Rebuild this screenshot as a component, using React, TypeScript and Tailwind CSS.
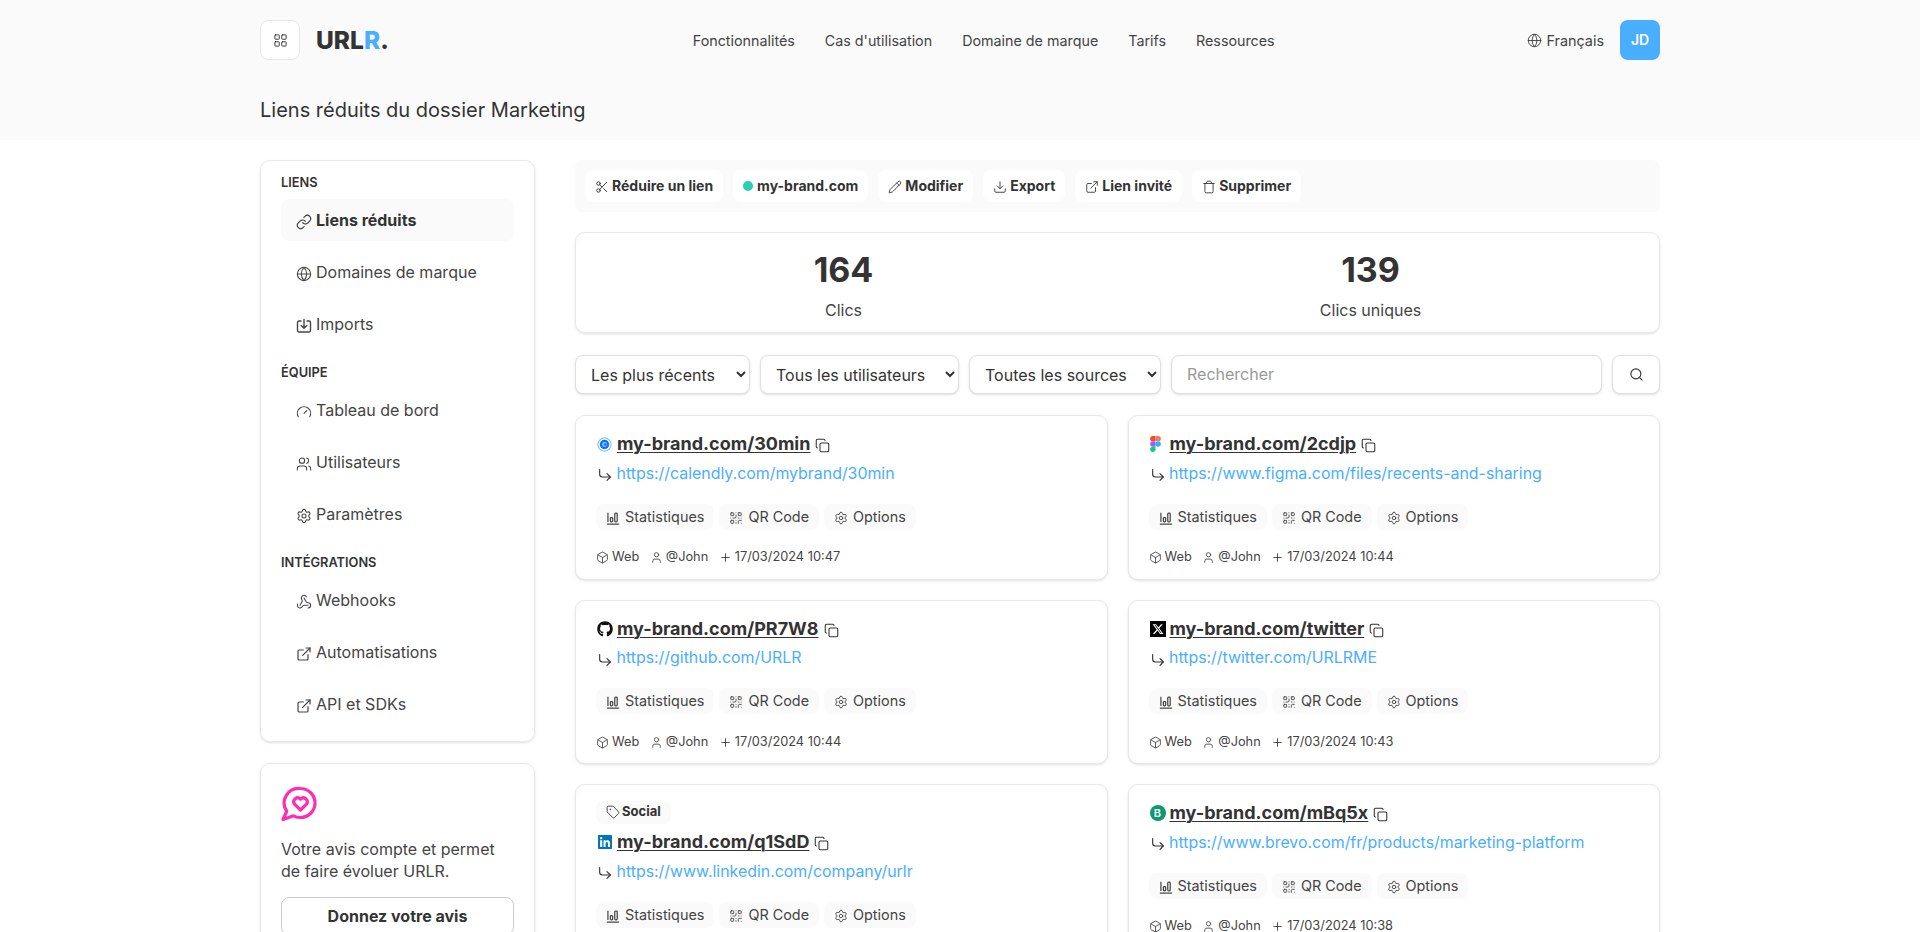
import {
  Box,
  Copy,
  CornerDownRight,
  Download,
  ExternalLink,
  Gauge,
  Globe,
  LayoutGrid,
  Link,
  Pencil,
  Plus,
  QrCode,
  Scissors,
  Search,
  Settings,
  Tag,
  Trash,
  User,
  Users,
  Webhook,
} from 'lucide-react';
import type { ReactNode } from 'react';
import { FaGithub, FaLinkedin, FaXTwitter } from 'react-icons/fa6';

function StatsIcon() {
  return (
    <svg viewBox="0 0 16 16" className="w-[14px] h-[14px] mt-[2px]" fill="none" stroke="currentColor" strokeWidth="1.4">
      <path d="M1 15h14" />
      <path d="M2.2 2v10.5" />
      <rect x="5" y="7.5" width="2.6" height="5" rx="1" />
      <rect x="10" y="2.5" width="2.8" height="10" rx="1" />
    </svg>
  );
}

function ImportIcon() {
  return (
    <svg viewBox="0 0 16 16" className="w-[16px] h-[16px] mt-[3px]" fill="none" stroke="currentColor" strokeWidth="1.4" strokeLinecap="round" strokeLinejoin="round">
      <path d="M5 3H3a1.5 1.5 0 0 0-1.5 1.5v8A1.5 1.5 0 0 0 3 14h10a1.5 1.5 0 0 0 1.5-1.5v-8A1.5 1.5 0 0 0 13 3h-2" />
      <path d="M8 1.5v8.5M5.2 7.5 8 10.2l2.8-2.7" />
    </svg>
  );
}

function Calendly() {
  return (
    <svg viewBox="0 0 16 16" className="w-[15px] h-[15px]">
      <circle cx="8" cy="8" r="7" fill="none" stroke="#86c9ff" strokeWidth="1.4" />
      <circle cx="8" cy="8" r="5" fill="#0d6efd" />
      <circle cx="8" cy="8" r="2.6" fill="#8fd0ff" />
      <circle cx="8.6" cy="8" r="1.4" fill="#0d6efd" />
    </svg>
  );
}

function Figma() {
  return (
    <svg viewBox="0 0 12 18" className="w-[11px] h-[16px]">
      <path d="M3 0h3v6H3a3 3 0 0 1 0-6z" fill="#f24e1e" />
      <path d="M6 0h3a3 3 0 0 1 0 6H6z" fill="#ff7262" />
      <path d="M3 6h3v6H3a3 3 0 0 1 0-6z" fill="#a259ff" />
      <circle cx="9" cy="9" r="3" fill="#1abcfe" />
      <path d="M3 12h3v3a3 3 0 1 1-3-3z" fill="#0acf83" />
    </svg>
  );
}

function Brevo() {
  return (
    <span className="w-4 h-4 rounded-full bg-[#0b996e] flex items-center justify-center text-white text-[11px] leading-none font-semibold">
      B
    </span>
  );
}

function XLogo() {
  return (
    <span className="w-4 h-4 bg-black flex items-center justify-center">
      <FaXTwitter size={12} color="#fff" />
    </span>
  );
}

function HeartBubble() {
  return (
    <svg viewBox="0 0 36 36" className="w-9 h-9" fill="none" stroke="#ff2db2" strokeWidth="3.2" strokeLinejoin="round" strokeLinecap="round">
      <path d="M19.5 2.5a14.5 14.5 0 0 1 0 29c-2.8 0-5-.6-7-1.7L2 33.5l3.8-8.4A14.5 14.5 0 0 1 19.5 2.5z" />
      <path d="M19.5 24l-6.2-6.2a3.9 3.9 0 0 1 5.3-5.4l.9.8.9-.8a3.9 3.9 0 0 1 5.3 5.4z" />
    </svg>
  );
}

const sideSections = [
  {
    title: 'Liens',
    items: [
      { label: 'Liens réduits', icon: <Link size={16} strokeWidth={1.6} className="mt-[3px]" />, active: true },
      { label: 'Domaines de marque', icon: <Globe size={16} strokeWidth={1.6} className="mt-[3px]" /> },
      { label: 'Imports', icon: <ImportIcon /> },
    ],
  },
  {
    title: 'Équipe',
    items: [
      { label: 'Tableau de bord', icon: <Gauge size={16} strokeWidth={1.6} className="mt-[3px]" /> },
      { label: 'Utilisateurs', icon: <Users size={16} strokeWidth={1.6} className="mt-[3px]" /> },
      { label: 'Paramètres', icon: <Settings size={16} strokeWidth={1.6} className="mt-[3px]" /> },
    ],
  },
  {
    title: 'Intégrations',
    items: [
      { label: 'Webhooks', icon: <Webhook size={16} strokeWidth={1.6} className="mt-[3px]" /> },
      { label: 'Automatisations', icon: <ExternalLink size={16} strokeWidth={1.8} className="mt-[3px]" /> },
      { label: 'API et SDKs', icon: <ExternalLink size={16} strokeWidth={1.8} className="mt-[3px]" /> },
    ],
  },
];

const toolbar = [
  { label: 'Réduire un lien', icon: <Scissors size={14} strokeWidth={1.6} className="mt-[2px]" /> },
  { label: 'my-brand.com', icon: <span className="w-[10px] h-[10px] rounded-full bg-[#26cfb5] mr-[1px]" /> },
  { label: 'Modifier', icon: <Pencil size={14} strokeWidth={1.5} className="mt-[1px]" /> },
  { label: 'Export', icon: <Download size={14} strokeWidth={1.5} className="mt-[2px]" /> },
  { label: 'Lien invité', icon: <ExternalLink size={14} strokeWidth={1.5} className="mt-[2px]" /> },
  { label: 'Supprimer', icon: <Trash size={14} strokeWidth={1.5} className="mt-[2px]" /> },
];

const links: { slug: string; url: string; date: string; icon: ReactNode; tag?: string }[] = [
  { slug: '30min', url: 'https://calendly.com/mybrand/30min', date: '17/03/2024 10:47', icon: <Calendly /> },
  { slug: '2cdjp', url: 'https://www.figma.com/files/recents-and-sharing', date: '17/03/2024 10:44', icon: <Figma /> },
  { slug: 'PR7W8', url: 'https://github.com/URLR', date: '17/03/2024 10:44', icon: <FaGithub size={16} color="#111" /> },
  { slug: 'twitter', url: 'https://twitter.com/URLRME', date: '17/03/2024 10:43', icon: <XLogo /> },
  { slug: 'q1SdD', url: 'https://www.linkedin.com/company/urlr', date: '17/03/2024 10:40', icon: <FaLinkedin size={16} color="#0077b5" />, tag: 'Social' },
  { slug: 'mBq5x', url: 'https://www.brevo.com/fr/products/marketing-platform', date: '17/03/2024 10:38', icon: <Brevo /> },
];

function Pill({ icon, label }: { icon: ReactNode; label: string }) {
  return (
    <span className="h-[26px] px-[10px] flex items-center gap-[5px] bg-[#fafafa] rounded-lg text-[14.4px] text-[#444]">
      {icon}
      {label}
    </span>
  );
}

function LinkCard({ slug, url, date, icon, tag }: (typeof links)[number]) {
  return (
    <div className="bg-white border border-[#e8e8e8] rounded-[10px] shadow-sm px-[20px] pt-[14.5px] pb-[12px] self-start w-full">
      {tag && (
        <span className="mt-[1px] mb-[5px] w-fit h-[23px] px-[10px] flex items-center gap-[2px] bg-[#fafafa] rounded-lg text-[13px] font-bold">
          <Tag size={14} strokeWidth={1.5} />
          {tag}
        </span>
      )}
      <div className="h-[27px] flex items-center">
        <span className="w-[21px] pl-[1px] flex items-center">{icon}</span>
        <span className="text-lg font-bold underline underline-offset-2 decoration-1">my-brand.com/{slug}</span>
        <Copy size={15} strokeWidth={1.7} className="ml-[5px] mt-[3px]" />
      </div>
      <div className="mt-[4px] h-6 flex items-center">
        <span className="w-[20.5px] pl-[1px] flex items-center">
          <CornerDownRight size={16} strokeWidth={1.7} className="mt-[3px]" />
        </span>
        <span className="text-[15.9px] text-[#4aaeff]">{url}</span>
      </div>
      <div className="mt-[18px] flex gap-[5px]">
        <Pill icon={<StatsIcon />} label="Statistiques" />
        <Pill icon={<QrCode size={14} strokeWidth={1.6} className="mt-[2px]" />} label="QR Code" />
        <Pill icon={<Settings size={14} strokeWidth={1.6} className="mt-[2px]" />} label="Options" />
      </div>
      <div className="mt-[18px] h-[19px] flex items-center gap-[10.5px] text-[12.8px] text-[#444]">
        <span className="flex items-center gap-[3px]">
          <Box size={13} strokeWidth={1.6} className="mt-[1px]" />
          Web
        </span>
        <span className="flex items-center gap-[3px]">
          <User size={13} strokeWidth={1.6} className="mt-[1px]" />
          @John
        </span>
        <span className="flex items-center gap-[3px]">
          <Plus size={13} strokeWidth={1.7} className="mt-[1px]" />
          {date}
        </span>
      </div>
    </div>
  );
}

export default function App() {
  return (
    <div className="h-screen overflow-hidden bg-white text-[#333] [font-family:Inter,sans-serif]">
      <header className="h-[140px] bg-[#fafafa]">
        <div className="w-[1400px] mx-auto pt-5">
          <div className="h-10 flex items-center">
            <button className="w-10 h-10 bg-white border border-[#e8e8e8] rounded-lg flex items-center justify-center">
              <LayoutGrid size={15} strokeWidth={1.5} />
            </button>
            <span className="ml-4 text-[24.5px] font-extrabold leading-none">
              URL<span className="text-[#4aaeff]">R</span>.
            </span>
            <nav className="ml-[304px] pt-[1px] flex gap-[30px] text-[14.3px] text-[#444]">
              <a>Fonctionnalités</a>
              <a>Cas d'utilisation</a>
              <a>Domaine de marque</a>
              <a>Tarifs</a>
              <a>Ressources</a>
            </nav>
            <div className="ml-auto pt-[1px] flex items-center text-[14.4px] text-[#444]">
              <Globe size={15} strokeWidth={1.5} className="mr-[4px]" />
              Français
            </div>
            <div className="ml-4 w-10 h-10 rounded-lg bg-[#4aaeff] text-white text-sm font-semibold flex items-center justify-center">
              JD
            </div>
          </div>
          <h1 className="mt-[36px] text-xl leading-7">Liens réduits du dossier Marketing</h1>
        </div>
      </header>

      <div className="w-[1400px] mx-auto pt-5 flex gap-10">
        <aside className="w-[275px] shrink-0 flex flex-col gap-[21px]">
          <div className="border border-[#e8e8e8] rounded-[10px] shadow-sm pt-[12px] pb-[6px] px-5">
            {sideSections.map((section) => (
              <div key={section.title} className="mb-[18px] last:mb-0">
                <h2 className="text-[12.8px] leading-5 font-semibold uppercase mb-[6px]">{section.title}</h2>
                {section.items.map((item) => (
                  <div
                    key={item.label}
                    className={`h-[42px] mb-[10px] rounded-lg px-[15px] flex items-center gap-[4px] ${
                      item.active ? 'bg-[#fafafa] font-bold' : 'text-[#444]'
                    }`}
                  >
                    {item.icon}
                    {item.label}
                  </div>
                ))}
              </div>
            ))}
          </div>
          <div className="border border-[#e8e8e8] rounded-[10px] shadow-sm pt-[22px] pb-5 px-5">
            <HeartBubble />
            <p className="mt-4 leading-[22px] text-[#444]">Votre avis compte et permet de faire évoluer URLR.</p>
            <button className="mt-[15px] w-full h-[38px] border border-[#ccc] rounded-lg font-bold">Donnez votre avis</button>
          </div>
        </aside>

        <main className="flex-1 min-w-0">
          <div className="h-[52px] bg-[#fafafa] rounded-lg px-[10px] flex items-center gap-[10px]">
            {toolbar.map((b) => (
              <button key={b.label} className="h-8 px-[10px] bg-white rounded-lg flex items-center gap-[3px] text-sm font-bold">
                {b.icon}
                {b.label}
              </button>
            ))}
          </div>

          <div className="mt-5 h-[101px] border border-[#e8e8e8] rounded-[10px] shadow-sm pl-[4px] flex text-center">
            <div className="w-[527px] pt-[16px]">
              <div className="text-[34px] leading-[41px] font-bold">164</div>
              <div className="mt-[8px] leading-6 text-[#444]">Clics</div>
            </div>
            <div className="w-[527px] pt-[16px]">
              <div className="text-[34px] leading-[41px] font-bold">139</div>
              <div className="mt-[8px] leading-6 text-[#444]">Clics uniques</div>
            </div>
          </div>

          <div className="mt-[22px] h-[39px] flex gap-[10px]">
            <select className="w-[175px] bg-white border border-[#e0e0e0] rounded-lg shadow-sm pl-[11px]">
              <option>Les plus récents</option>
            </select>
            <select className="w-[199px] bg-white border border-[#e0e0e0] rounded-lg shadow-sm pl-[11px]">
              <option>Tous les utilisateurs</option>
            </select>
            <select className="w-[192px] bg-white border border-[#e0e0e0] rounded-lg shadow-sm pl-[11px]">
              <option>Toutes les sources</option>
            </select>
            <input
              placeholder="Rechercher"
              className="flex-1 min-w-0 bg-white border border-[#e0e0e0] rounded-lg shadow-sm pl-[15px] pb-[1px] placeholder:text-[#999]"
            />
            <button className="w-12 bg-white border border-[#e0e0e0] rounded-lg shadow-sm flex items-center justify-center">
              <Search size={15} strokeWidth={1.8} />
            </button>
          </div>

          <div className="mt-[21px] grid grid-cols-2 gap-5">
            {links.map((l) => (
              <LinkCard key={l.slug} {...l} />
            ))}
          </div>
        </main>
      </div>
    </div>
  );
}
